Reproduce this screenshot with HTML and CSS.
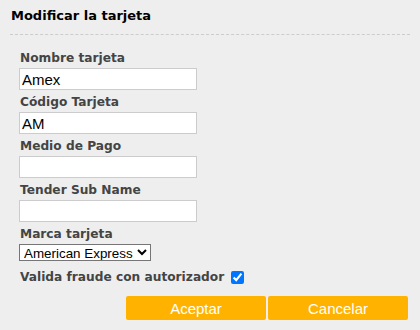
FILE: index.html
```html
<!DOCTYPE html>
<html>
<head>
  <title>Modificar la tarjeta</title>
  <link rel="stylesheet" href="styles.css">
</head>
<body>
  <div class="panel">
    <h2 class="title">Modificar la tarjeta</h2>

    <form class="cardForm">
      <label class="lbl" for="nombre">Nombre tarjeta</label>
      <input class="txt" id="nombre" type="text" value="Amex">

      <label class="lbl" for="codigo">Código Tarjeta</label>
      <input class="txt" id="codigo" type="text" value="AM">

      <label class="lbl" for="medio">Medio de Pago</label>
      <input class="txt" id="medio" type="text" value="">

      <label class="lbl" for="tender">Tender Sub Name</label>
      <input class="txt" id="tender" type="text" value="">

      <label class="lbl" for="marca">Marca tarjeta</label>
      <select class="sel" id="marca">
        <option>American Express</option>
        <option>Visa</option>
        <option>Mastercard</option>
      </select>

      <div class="checkRow">
        <label class="lbl inline" for="fraude">Valida fraude con autorizador</label>
        <input class="chk" id="fraude" type="checkbox" checked>
      </div>

      <div class="buttons">
        <button type="button" class="btn">Aceptar</button>
        <button type="button" class="btn">Cancelar</button>
      </div>
    </form>
  </div>
</body>
</html>
```

FILE: styles.css
```css
body {
  margin: 0;
  background: #eeeeee;
  font-family: "DejaVu Sans", Verdana, sans-serif;
}

.panel {
  padding: 0 10px;
}

.title {
  margin: 0;
  padding: 8px 0 10px 1px;
  font-size: 13px;
  line-height: 16px;
  font-weight: bold;
  color: #000;
  border-bottom: 1px dashed #cccccc;
}

.cardForm {
  padding: 15px 0 0 9px;
}

.lbl {
  display: block;
  font-size: 12.2px;
  line-height: 17px;
  font-weight: bold;
  color: #444444;
  margin: 0 0 1px 1px;
}

.lbl.inline {
  display: inline-block;
  margin: 0 0 0 1px;
}

.txt {
  display: block;
  box-sizing: border-box;
  width: 178px;
  height: 22px;
  margin: 0 0 4px 0;
  padding: 0 2px;
  border: 1px solid #cccccc;
  background: #fff;
  font-family: "Liberation Sans", Arial, sans-serif;
  font-size: 15px;
  color: #000;
}

.sel {
  display: block;
  box-sizing: border-box;
  width: 132px;
  height: 17px;
  padding: 0;
  border: 1px solid #767676;
  border-radius: 0;
  background: #fff;
  font-family: "Liberation Sans", Arial, sans-serif;
  font-size: 13.4px;
  color: #000;
}

.checkRow {
  display: flex;
  align-items: center;
  margin-top: 5px;
  height: 22px;
}

.chk {
  width: 13px;
  height: 13px;
  margin: 0 0 0 7px;
}

.buttons {
  display: flex;
  justify-content: flex-end;
  gap: 2px;
  margin: 8px 2px 0 0;
}

.btn {
  width: 140px;
  height: 24px;
  border: none;
  border-radius: 2px;
  background: #ffb300;
  color: #fff;
  font-family: "Liberation Sans", Arial, sans-serif;
  font-size: 15px;
  padding: 0;
}
```
